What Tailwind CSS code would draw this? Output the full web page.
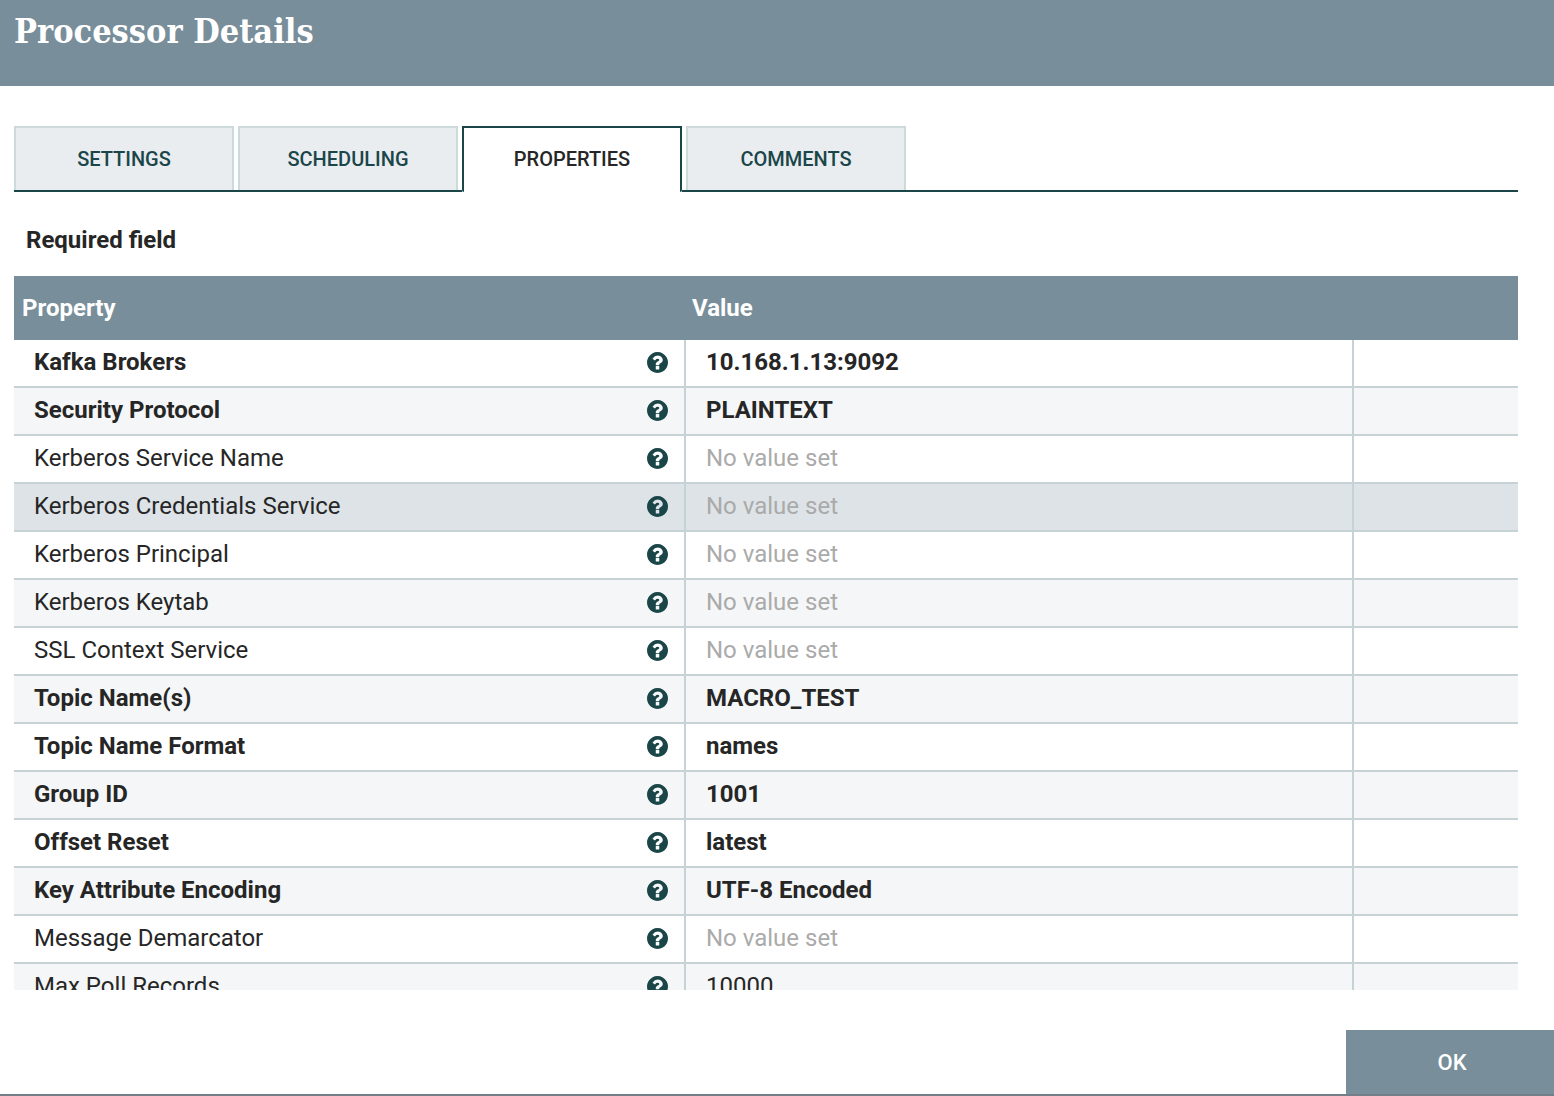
<!DOCTYPE html>
<html lang="en">
<head>
<meta charset="utf-8">
<meta name="viewport" content="width=device-width, initial-scale=1">
<title>Processor Details</title>
<script src="https://cdn.jsdelivr.net/npm/@tailwindcss/browser@4"></script>
</head>
<body class="flex h-screen flex-col overflow-hidden border-b-2 border-[#727e88] bg-white font-[Roboto,sans-serif] text-[#262626]">
<svg class="hidden" aria-hidden="true">
  <symbol id="help" viewBox="0 0 1536 1536">
    <path fill="currentColor" d="M896 1248v-192q0-14-9-23t-23-9H672q-14 0-23 9t-9 23v192q0 14 9 23t23 9h192q14 0 23-9t9-23zm256-672q0-88-55.500-163T958 297t-170-41q-243 0-371 213-15 24 8 42l132 100q7 6 19 6 16 0 25-12 53-68 86-92 34-24 86-24 48 0 85.500 26t37.500 59q0 38-20 61t-68 45q-63 28-115.500 86.500T640 892v36q0 14 9 23t23 9h192q14 0 23-9t9-23q0-19 21.500-49.500T972 829q32-18 49-28.500t46-35 44.500-48 28-60.500 12.500-81zm384 192q0 209-103 385.500T1153.500 1433 768 1536t-385.500-103T103 1153.500 0 768t103-385.500T382.500 103 768 0t385.500 103T1433 382.500 1536 768z"/>
  </symbol>
</svg>

<header class="h-[86px] shrink-0 bg-[#788e9a] px-3.5 pt-2">
  <h1 class="font-['Roboto_Slab','DejaVu_Serif_Condensed','DejaVu_Serif',serif] text-[34px] leading-[46px] font-bold whitespace-nowrap text-white">Processor Details</h1>
</header>

<main class="flex min-h-0 flex-1 flex-col pt-10 pr-9 pb-10 pl-3.5">
  <div role="tablist" class="flex shrink-0 text-xl leading-6 font-medium text-[#1b4649]">
    <div role="presentation" class="border-b-2 border-[#1b4649] pr-1">
      <button role="tab" aria-selected="false" class="block h-16 w-[220px] border-2 border-b-0 border-[#cddadb] bg-[#e9edf0]">SETTINGS</button>
    </div>
    <div role="presentation" class="border-b-2 border-[#1b4649] pr-1">
      <button role="tab" aria-selected="false" class="block h-16 w-[220px] border-2 border-b-0 border-[#cddadb] bg-[#e9edf0]">SCHEDULING</button>
    </div>
    <button role="tab" aria-selected="true" class="block h-[66px] w-[220px] rounded-b-xs border-2 border-b-0 border-[#1b4649] bg-white pb-0.5 text-[#262626]">PROPERTIES</button>
    <div role="presentation" class="flex-1 border-b-2 border-[#1b4649] pl-1">
      <button role="tab" aria-selected="false" class="block h-16 w-[220px] border-2 border-b-0 border-[#cddadb] bg-[#e9edf0]">COMMENTS</button>
    </div>
  </div>

  <p class="mt-8 mb-5 shrink-0 px-3 text-2xl leading-8 font-bold">Required field</p>

  <div class="min-h-0 flex-1 overflow-hidden">
    <table class="w-full table-fixed border-separate border-spacing-0 text-left text-2xl">
      <colgroup><col class="w-[672px]"><col><col class="w-[164px]"></colgroup>
      <thead>
        <tr class="h-16 bg-[#788e9a] text-white">
          <th scope="col" class="px-2 font-bold">Property</th>
          <th scope="col" class="px-1.5 font-bold">Value</th>
          <td></td>
        </tr>
      </thead>
      <tbody id="rows"></tbody>
    </table>
  </div>
</main>

<footer class="flex shrink-0 justify-end">
  <button class="h-16 w-52 bg-[#788e9a] pl-1 text-[22px] font-medium text-white">OK</button>
</footer>

<script>
  // name, value, required, selected
  const properties = [
    ["Kafka Brokers", "10.168.1.13:9092", true],
    ["Security Protocol", "PLAINTEXT", true],
    ["Kerberos Service Name", null],
    ["Kerberos Credentials Service", null, false, true],
    ["Kerberos Principal", null],
    ["Kerberos Keytab", null],
    ["SSL Context Service", null],
    ["Topic Name(s)", "MACRO_TEST", true],
    ["Topic Name Format", "names", true],
    ["Group ID", "1001", true],
    ["Offset Reset", "latest", true],
    ["Key Attribute Encoding", "UTF-8 Encoded", true],
    ["Message Demarcator", null],
    ["Max Poll Records", "10000"],
  ];
  document.getElementById("rows").innerHTML = properties.map(([name, value, required, selected], i) => `
    <tr class="h-12 leading-7 ${selected ? "bg-[#dde3e6]" : i % 2 ? "bg-[#f4f6f7]" : "bg-white"} ${required ? "font-bold" : "font-normal"}">
      <td class="border-r-2 border-b-2 border-[#c7d2d7] pr-4 pb-0.5 pl-5">
        <div class="flex items-center justify-between">
          <span>${name}</span>
          <svg class="size-[21px] text-[#1b4649]" role="img" aria-label="Help"><use href="#help"/></svg>
        </div>
      </td>
      <td class="border-r-2 border-b-2 border-[#c7d2d7] pb-0.5 pl-5 ${value === null ? "text-[#aaaaaa]" : ""}">${value ?? "No value set"}</td>
      <td class="border-b-2 border-[#c7d2d7]"></td>
    </tr>`).join("");
</script>
</body>
</html>
